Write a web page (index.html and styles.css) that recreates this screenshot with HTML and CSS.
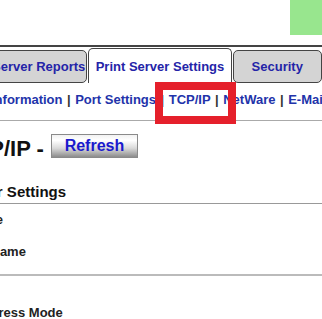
FILE: index.html
```html
<!DOCTYPE html>
<html lang="en">
<head>
  <meta charset="UTF-8" />
  <title>Print Server Settings - TCP/IP</title>
  <link rel="stylesheet" href="styles.css">
</head>
<body>
  <div class="page">
    <header class="masthead">
      <div class="brand-box"></div>
    </header>

    <nav class="tabs">
      <a class="tab" href="#">Server Reports</a>
      <a class="tab active" href="#">Print Server Settings</a>
      <a class="tab" href="#">Security</a>
    </nav>

    <div class="subnav">
      <a href="#">Information</a><span class="sep">|</span><a href="#">Port Settings</a><span class="sep">|</span><a href="#">TCP/IP</a><span class="sep">|</span><a href="#">NetWare</a><span class="sep">|</span><a href="#">E-Mail</a>
    </div>

    <div class="title-row">
      <h1>TCP/IP -</h1>
      <button class="refresh">Refresh</button>
    </div>

    <h2 class="section-title">Server Settings</h2>
    <div class="field">IP Type</div>
    <div class="field">Host Name</div>

    <div class="section">
      <div class="field">IP Address Mode</div>
    </div>
  </div>

  <div class="highlight"></div>
</body>
</html>
```

FILE: styles.css
```css
body {
  margin: 0;
  overflow: hidden;
  background: #fff;
  font-family: "Liberation Sans", Arial, sans-serif;
  color: #111;
}

/* page is scrolled a little to the right */
.page {
  margin-left: -44px;
  width: calc(100% + 44px);
}

.masthead {
  height: 45px;
  display: flex;
  justify-content: flex-end;
  border-bottom: 2px solid #444;
}

.brand-box {
  width: 32px;
  height: 35px;
  background: #98e68e;
}

.tabs {
  display: flex;
  align-items: flex-end;
  height: 36px;
  margin-left: 34px;
}

.tab {
  box-sizing: border-box;
  display: flex;
  align-items: center;
  justify-content: center;
  height: 33px;
  margin-right: 1px;
  background: #d4d4d4;
  border: 1px solid #444;
  border-radius: 5px;
  font-size: 13px;
  font-weight: bold;
  color: #2424a8;
  text-decoration: none;
  white-space: nowrap;
}

.tab:nth-child(1) { width: 98px; }
.tab:nth-child(2) { width: 144px; }
.tab:nth-child(3) { width: 90px; margin-right: 0; }

.tab.active {
  height: 35px;
  padding-top: 1px;
  background: #fff;
  border-bottom: none;
  border-radius: 5px 5px 0 0;
}

.subnav {
  padding: 9px 0 12px 35px;
  line-height: 16px;
  font-size: 13px;
  font-weight: bold;
  white-space: nowrap;
  border-bottom: 1px solid #aaa;
}

.subnav a {
  color: #2233aa;
  text-decoration: none;
}

.sep {
  margin: 0 4.5px;
  color: #333;
}

.title-row {
  display: flex;
  align-items: flex-start;
}

h1 {
  margin: 17px 7px 0 4px;
  font-size: 22px;
  line-height: 22px;
  white-space: nowrap;
}

.refresh {
  box-sizing: border-box;
  margin-top: 13px;
  width: 87px;
  height: 24px;
  padding: 0;
  border: 1px solid #8a8a8a;
  background: linear-gradient(#f2f2f2, #ffffff 25%, #dadada 60%, #8c8c8c);
  font-family: inherit;
  font-size: 16px;
  font-weight: bold;
  color: #1a1acd;
}

.section-title {
  margin: 23px 0 0;
  padding-bottom: 2px;
  font-size: 15px;
  line-height: 18px;
  white-space: nowrap;
  border-bottom: 1px solid #999;
}

.field {
  padding-left: 2px;
  line-height: 32px;
  font-size: 13px;
  font-weight: bold;
  color: #222;
  white-space: nowrap;
}

.section {
  margin-top: 6px;
  padding-top: 21px;
  border-top: 2px solid #bbb;
}

.highlight {
  position: absolute;
  left: 155px;
  top: 82px;
  width: 81px;
  height: 42px;
  box-sizing: border-box;
  border: 8px solid #e5202b;
}
```
